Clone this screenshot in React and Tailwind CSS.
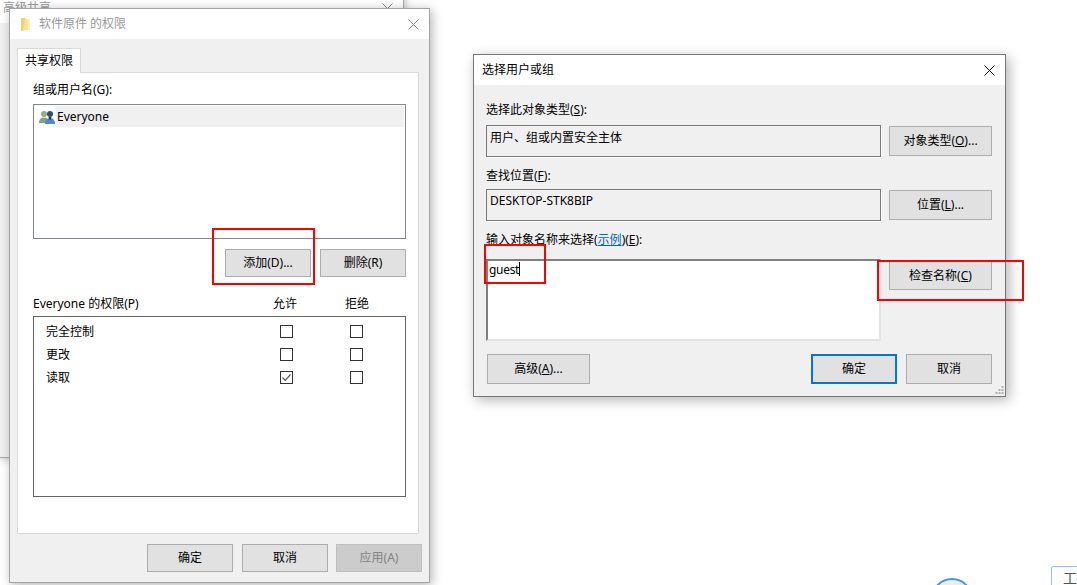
import React from "react";

const CloseIcon = ({ className }) => (
  <svg viewBox="0 0 11 11" className={className} fill="none" stroke="currentColor" strokeWidth="1">
    <path d="M0.5 0.5L10.5 10.5M10.5 0.5L0.5 10.5" />
  </svg>
);

const FolderIcon = () => (
  <svg viewBox="0 0 10 14" className="w-[10px] h-[14px]">
    <path d="M0 1h4l1 1v11l-4 1H0z" fill="#f5d06f" />
    <path d="M4 2h3.5v11H2z" fill="#fbe39a" />
    <path d="M7 2h2v11H7z" fill="#fdf0c4" />
  </svg>
);

const UsersIcon = () => (
  <svg viewBox="0 0 16 16" className="w-[16px] h-[16px]">
    <circle cx="5" cy="5" r="3" fill="#8fae8c" />
    <path d="M0 14c0-4 2-5.500 5-5.500S9 10 9 14z" fill="#7fa582" />
    <circle cx="11" cy="5" r="3" fill="#2f4f6b" />
    <path d="M6 15c0-4 2-6 5-6s5 2 5 6z" fill="#4f8cc9" />
    <path d="M9.500 8h3l-1 3h-1z" fill="#23384c" />
  </svg>
);

const Btn = ({ className = "", children }) => (
  <button className={`flex items-center justify-center bg-[#e1e1e1] border border-[#adadad] text-black shrink-0 ${className}`}>
    {children}
  </button>
);

const Permission = ({ label, checked }) => (
  <div className="grid grid-cols-[234px_70px_13px] items-center h-[23px] pl-[12px]">
    <span>{label}</span>
    <span className="flex items-center justify-center w-[13px] h-[13px] border border-[#333] bg-white">
      {checked && (
        <svg viewBox="0 0 11 11" className="w-[11px] h-[11px]" fill="none" stroke="#555" strokeWidth="1.200">
          <path d="M1.500 5.500L4.300 8.300L9.500 2.500" />
        </svg>
      )}
    </span>
    <span className="w-[13px] h-[13px] border border-[#333] bg-white" />
  </div>
);

const ResizeGrip = () => (
  <svg viewBox="0 0 9 9" className="absolute right-[1px] bottom-[1px] w-[9px] h-[9px]" fill="#b0b0b0">
    <rect x="6.500" y="0" width="2" height="2" />
    <rect x="3.500" y="3" width="2" height="2" />
    <rect x="6.500" y="3" width="2" height="2" />
    <rect x="0.500" y="6" width="2" height="2" />
    <rect x="3.500" y="6" width="2" height="2" />
    <rect x="6.500" y="6" width="2" height="2" />
  </svg>
);

const PermissionsWindow = () => (
  <div className="absolute left-[9px] top-[8px] w-[421px] h-[575px] flex flex-col border border-[#a3a3a3] bg-[#f0f0f0] shadow-[2px_2px_10px_rgba(0,0,0,0.3)]">
    <div className="h-[30px] bg-white flex items-center shrink-0 pl-[11px] pr-[10px]">
      <FolderIcon />
      <span className="ml-[8px] text-[#999]">软件原件 的权限</span>
      <CloseIcon className="ml-auto w-[11px] h-[11px] text-[#888]" />
    </div>
    <div className="flex-1 px-[7px] pt-[9px]">
      <div className="relative z-10 -mb-px w-[64px] h-[25px] bg-white border border-b-0 border-[#d9d9d9] flex items-center justify-center">
        共享权限
      </div>
      <div className="w-[402px] h-[462px] bg-white border border-[#d9d9d9] px-[15px] pt-[8px]">
        <div>组或用户名(G):</div>
        <div className="mt-[5px] w-[373px] h-[135px] border border-[#828790] pt-[1px]">
          <div className="flex items-center h-[21px] pl-[5px]">
            <UsersIcon />
            <span className="flex-1 ml-px pl-px h-full flex items-center bg-[#f0f0f0] mr-px">Everyone</span>
          </div>
        </div>
        <div className="mt-[10px] w-[373px] flex justify-end gap-[9px]">
          <Btn className="w-[86px] h-[28px]">添加(D)...</Btn>
          <Btn className="w-[86px] h-[28px]">删除(R)</Btn>
        </div>
        <div className="mt-[18px] grid grid-cols-[240px_72px_24px]">
          <span>Everyone 的权限(P)</span>
          <span>允许</span>
          <span>拒绝</span>
        </div>
        <div className="mt-[3px] w-[373px] h-[181px] border border-[#646464] pt-[3px]">
          <Permission label="完全控制" />
          <Permission label="更改" />
          <Permission label="读取" checked />
        </div>
      </div>
      <div className="mt-[10px] flex justify-end">
        <Btn className="w-[86px] h-[28px]">确定</Btn>
        <Btn className="ml-[9px] w-[86px] h-[28px]">取消</Btn>
        <Btn className="ml-[8px] w-[86px] h-[28px] !bg-[#cccccc] !border-[#bfbfbf] !text-[#838383]">应用(A)</Btn>
      </div>
    </div>
  </div>
);

const SelectWindow = () => (
  <div className="absolute left-[473px] top-[54px] w-[533px] h-[343px] flex flex-col border border-[#777] bg-[#f0f0f0] shadow-[3px_3px_12px_rgba(0,0,0,0.3)]">
    <div className="h-[30px] bg-white flex items-center shrink-0 pl-[8px] pr-[10px]">
      <span>选择用户或组</span>
      <CloseIcon className="ml-auto w-[11px] h-[11px] text-black" />
    </div>
    <div className="flex-1 pl-[12px] pr-[13px] pt-[16px]">
      <div>选择此对象类型(<u>S</u>):</div>
      <div className="mt-[6px] flex items-start">
        <div className="w-[395px] h-[32px] border border-[#7a7a7a] shadow-[1px_1px_0_#ffffff] px-[3px] pt-[3px]">用户、组或内置安全主体</div>
        <Btn className="ml-[8px] mt-[1px] w-[103px] h-[30px]">对象类型(<u>O</u>)...</Btn>
      </div>
      <div className="mt-[10px]">查找位置(<u>F</u>):</div>
      <div className="mt-[4px] flex items-start">
        <div className="w-[395px] h-[32px] border border-[#7a7a7a] shadow-[1px_1px_0_#ffffff] px-[3px] pt-[2px]">DESKTOP-STK8BIP</div>
        <Btn className="ml-[8px] mt-[1px] w-[103px] h-[30px]">位置(<u>L</u>)...</Btn>
      </div>
      <div className="mt-[10px]">
        输入对象名称来选择(<span className="text-[#0066cc] underline">示例</span>)(<u>E</u>):
      </div>
      <div className="mt-[10px] flex items-start">
        <div className="w-[395px] h-[82px] bg-white border-2 border-t-[#808080] border-l-[#808080] border-r-[#e3e3e3] border-b-[#e3e3e3] pl-px flex items-start">
          <span className="tracking-[-0.3px]">guest</span>
          <span className="w-px h-[14px] bg-black mt-[1px]" />
        </div>
        <Btn className="ml-[8px] mt-[2px] w-[103px] h-[29px]">检查名称(<u>C</u>)</Btn>
      </div>
      <div className="mt-[13px] flex">
        <Btn className="ml-px w-[103px] h-[30px]">高级(<u>A</u>)...</Btn>
        <Btn className="ml-auto w-[86px] h-[30px] !border-2 !border-[#0078d7]">确定</Btn>
        <Btn className="ml-[9px] w-[86px] h-[30px]">取消</Btn>
      </div>
    </div>
    <ResizeGrip />
  </div>
);

const App = () => {
  return (
    <div className="relative w-[1077px] h-[585px] overflow-hidden bg-white text-black text-[12px] leading-[18px] font-['Noto_Sans','Noto_Sans_CJK_SC',sans-serif]">
      {/* window behind, mostly covered */}
      <div className="absolute -left-px -top-[8px] w-[405px] h-[466px] bg-[#f0f0f0] border border-[#a8a8a8] shadow-[1px_1px_8px_rgba(0,0,0,0.25)]">
        <div className="h-[30px] bg-white flex items-center pl-[3px] pr-[10px] text-[#999]">
          <span>高级共享</span>
          <CloseIcon className="ml-auto w-[11px] h-[11px] text-[#888]" />
        </div>
      </div>

      <PermissionsWindow />
      <SelectWindow />

      {/* red marks drawn on the screenshot */}
      <div className="absolute left-[212px] top-[228px] w-[103px] h-[57px] border-2 border-[#f00]" />
      <div className="absolute left-[484px] top-[244px] w-[62px] h-[40px] border-2 border-[#f00]" />
      <div className="absolute left-[877px] top-[260px] w-[147px] h-[41px] border-2 border-[#f00]" />

      {/* corners of what lies at the bottom of the page */}
      <div className="absolute left-[931px] top-[578px] w-[42px] h-[42px] rounded-full border-2 border-[#3b96f5] bg-[#eeeeee]" />
      <div className="absolute left-[1051px] top-[566px] w-[60px] h-[40px] rounded-[2px] border border-[#8fc4f7] pl-[11px] pt-[2px] text-[#555] text-[14px]">工</div>
    </div>
  );
};

export default App;
